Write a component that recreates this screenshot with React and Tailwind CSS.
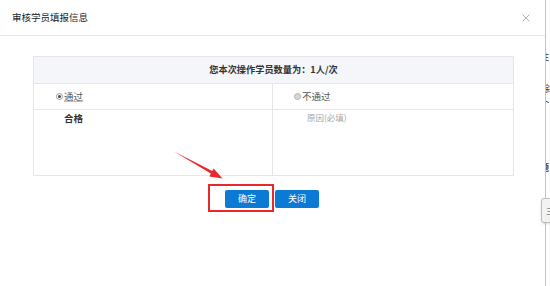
export default function App() {
  const font = { fontFamily: '"Noto Sans CJK SC", "Liberation Sans", sans-serif' }

  return (
    <div className="relative flex h-[286px] w-[550px] overflow-hidden bg-white text-[#333]" style={font}>
      <div className="flex h-full w-[546px] shrink-0 flex-col border-r border-[#c4c4c4] bg-white">
        <div className="flex h-[36px] items-center justify-between border-b border-[#e6e6e6] pl-[12px] pr-[15px]">
          <span className="text-[9.5px] leading-none text-[#222]">审核学员填报信息</span>
          <svg width="8" height="8" viewBox="0 0 8 8" className="text-[#a8a8a8]">
            <path d="M0.5 0.5L7.5 7.5M7.5 0.5L0.5 7.5" stroke="currentColor" strokeWidth="0.9" />
          </svg>
        </div>

        <div className="pl-[33px] pt-[20px]">
          <div className="w-[481px] border border-[#e6e6e6]">
            <div className="flex h-[27px] items-center justify-center border-b border-[#e6e6e6] bg-[#f5f6f9] text-[9.2px] font-bold">
              您本次操作学员数量为：1人/次
            </div>
            <div className="grid grid-cols-[239px_1fr]">
              <div className="flex h-[26px] items-center border-b border-r border-[#e6e6e6] pl-[22px] text-[9.5px] text-[#555]">
                <span className="mr-[1px] flex h-[7px] w-[7px] items-center justify-center rounded-full border border-[#9a9a9a] bg-white">
                  <span className="h-[3px] w-[3px] rounded-full bg-[#444]" />
                </span>
                <span className="underline decoration-[#bbb]">通过</span>
              </div>
              <div className="flex h-[26px] items-center border-b border-[#e6e6e6] pl-[21px] text-[9.5px] text-[#555]">
                <span className="mr-[1px] h-[7px] w-[7px] rounded-full border border-[#b5b5b5] bg-[#d6d6d6]" />
                <span>不通过</span>
              </div>
              <div className="h-[65px] border-r border-[#e6e6e6] pl-[30px] pt-[1px] text-[9.5px] font-bold">合格</div>
              <div className="h-[65px] pl-[34px] pt-[1px] text-[8.5px] text-[#a6a6a6]">原因(必填)</div>
            </div>
          </div>

          <div className="mt-[14px] flex w-[481px] justify-center gap-[6px] pr-[3px]">
            <button className="h-[18px] w-[44px] rounded-[2px] bg-[#0b7ad5] text-[9px] text-white">确定</button>
            <button className="h-[18px] w-[44px] rounded-[2px] bg-[#0b7ad5] text-[9px] text-white">关闭</button>
          </div>
        </div>
      </div>

      <div className="flex flex-1 flex-col overflow-hidden bg-white pt-[50px] text-[9px] text-[#333]">
        <span className="-ml-[6px]">注</span>
        <span className="-ml-[5px] mt-[18px]">除</span>
        <span className="-ml-[5px]">卜</span>
        <span className="-ml-[6px] mt-[52px] font-bold">题</span>
      </div>

      <div className="absolute left-[541px] top-[198px] flex h-[25px] w-[14px] items-center rounded-[3px] border border-[#bdbdbd] bg-[#f2f2f2] pl-[4px] text-[8px] text-[#555] shadow">
        三
      </div>

      <div className="absolute left-[208px] top-[184px] h-[28px] w-[66px] border-2 border-[#e8282c]" />

      <svg className="absolute left-[170px] top-[145px]" width="56" height="36" viewBox="0 0 56 36">
        <polygon points="4,6.5 42.3,26 43.6,23.4 52.5,33.5 39.4,31.4 40.8,28.6" fill="#e8282c" />
      </svg>
    </div>
  )
}
